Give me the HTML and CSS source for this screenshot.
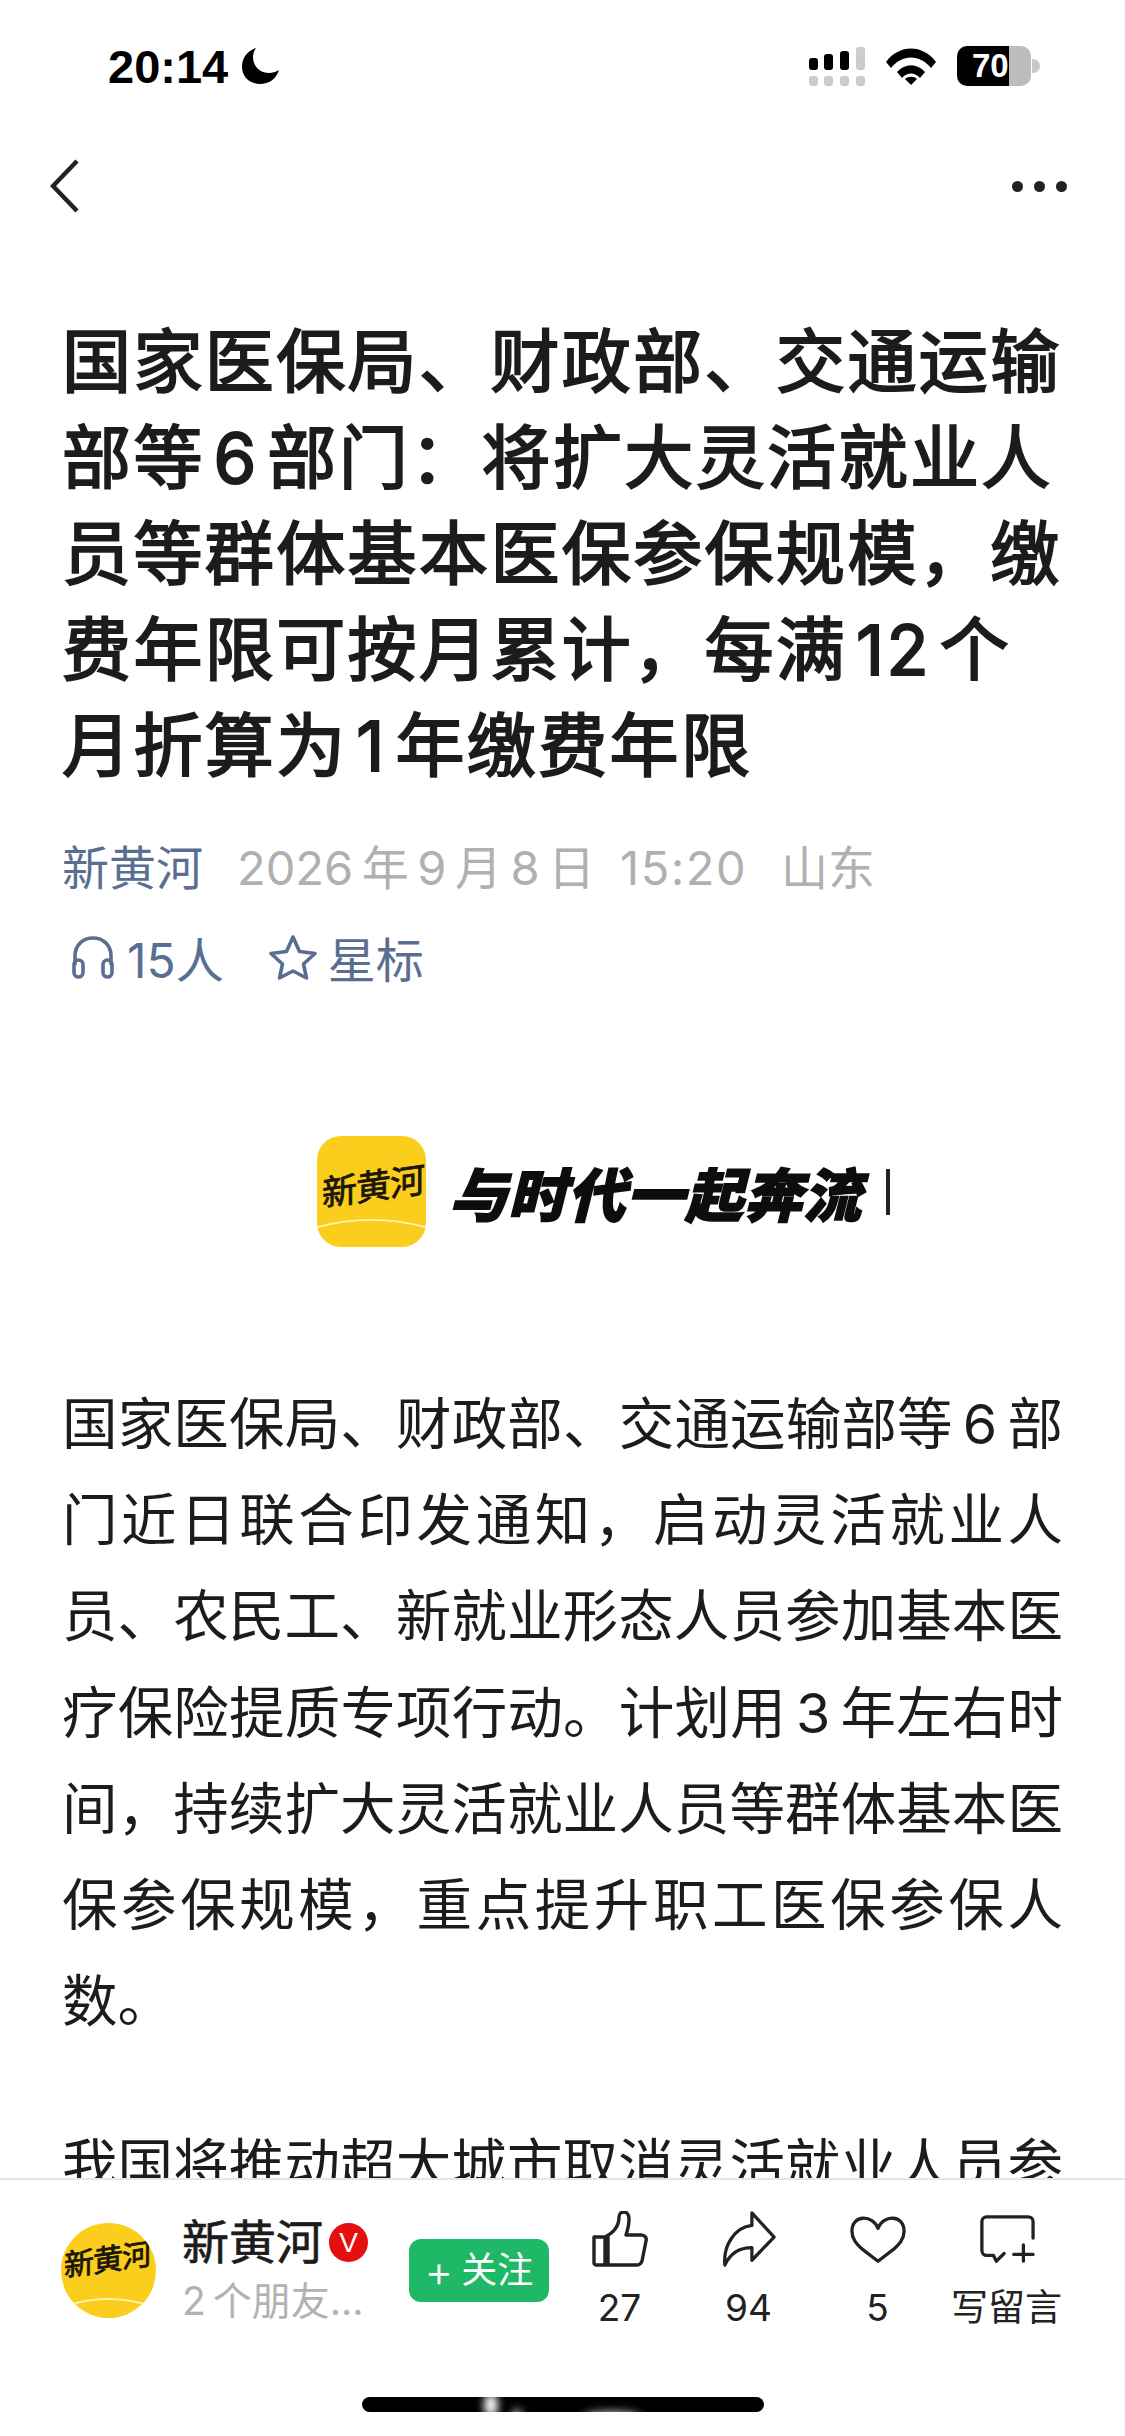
FILE: index.html
```html
<!DOCTYPE html>
<html lang="zh-CN">
<head>
  <meta charset="UTF-8" />
  <meta name="viewport" content="width=device-width, initial-scale=1.0"/>
  <title>新黄河</title>
  <link rel="stylesheet" href="styles.css">
</head>
<body>
<div class="page">

  <!-- Status bar -->
  <div class="status-bar">
    <div class="status-left">
      <span class="time">20:14</span>
      <svg class="moon" viewBox="0 0 37 36"><path d="M14 0C5 3 0 10 0 19c0 10 8 17 18 17 9 0 16-5 19-14-3 2-7 3-10 3C18 25 11 18 11 9c0-3 1-6 3-9z" fill="#000"/></svg>
    </div>
    <div class="status-right">
      <svg class="signal" viewBox="0 0 57 39">
        <rect x="0" y="11" width="9" height="12" rx="3" fill="#000"/>
        <rect x="15" y="7" width="9" height="16" rx="3" fill="#000"/>
        <rect x="31" y="4" width="9" height="19" rx="3" fill="#000"/>
        <rect x="47" y="0" width="9" height="23" rx="3" fill="#ccc"/>
        <rect x="0" y="29" width="9" height="10" rx="3" fill="#ccc"/>
        <rect x="15" y="29" width="9" height="10" rx="3" fill="#ccc"/>
        <rect x="31" y="29" width="9" height="10" rx="3" fill="#ccc"/>
        <rect x="47" y="29" width="9" height="10" rx="3" fill="#ccc"/>
      </svg>
      <svg class="wifi" viewBox="0 0 50 37">
        <path d="M0 14C13 -4 37 -4 50 14l-5 6C34 6 16 6 5 20z" fill="#000"/>
        <path d="M11 24c8-9 20-9 28 0l-5 6c-5-6-13-6-18 0z" fill="#000"/>
        <path d="M19 31c3-3 9-3 12 0l-6 6z" fill="#000"/>
      </svg>
      <div class="battery">
        <div class="battery-body">
          <span class="battery-level">70</span>
        </div>
        <div class="battery-nub"></div>
      </div>
    </div>
  </div>

  <!-- Nav -->
  <div class="nav">
    <svg class="back" viewBox="0 0 30 54"><path d="M27 2 3 27l24 25" fill="none" stroke="#222" stroke-width="4.5"/></svg>
    <div class="more"><i></i><i></i><i></i></div>
  </div>

  <!-- Article -->
  <div class="article">
    <h1 class="title">国家医保局、财政部、交通运输<br>部等&#8202;6&#8202;部门：将扩大灵活就业人<br>员等群体基本医保参保规模，缴<br>费年限可按月累计，每满&#8202;12&#8202;个<br>月折算为&#8202;1&#8202;年缴费年限</h1>

    <div class="meta">
      <span class="source">新黄河</span>
      <span class="date">2026&thinsp;年&thinsp;9&thinsp;月&thinsp;8&thinsp;日</span>
      <span class="date time-stamp">15:20</span>
      <span class="date">山东</span>
    </div>
    <div class="meta-links">
      <span class="meta-link">
        <svg class="headphones" viewBox="0 0 44 44" fill="none" stroke="#5a6e92" stroke-width="3.6">
          <path d="M4 30V21C4 10 12 3 22 3s18 7 18 18v9"/>
          <rect x="3" y="25" width="9" height="17" rx="4.5"/>
          <rect x="32" y="25" width="9" height="17" rx="4.5"/>
        </svg>
        15人
      </span>
      <span class="meta-link">
        <svg class="star" viewBox="0 0 48 46" fill="none" stroke="#5a6e92" stroke-width="3.6" stroke-linejoin="round"><path d="M24 3l6.5 14.500L46 19.500 34.500 30l3 14L24 37l-13.500 7 3-14L2 19.500 17.500 17.500z"/></svg>
        星标
      </span>
    </div>

    <div class="banner">
      <div class="brand-logo">
        <span class="brand-name">新黄河</span>
        <svg class="brand-arc" viewBox="0 0 109 30" preserveAspectRatio="none"><path d="M0 14Q54 -6 109 14" fill="none" stroke="#fff3b8" stroke-width="2.500"/></svg>
      </div>
      <span class="slogan">与时代一起奔流</span>
      <span class="cursor"></span>
    </div>

    <div class="para">
      <span class="ln">国家医保局、财政部、交通运输部等&thinsp;6&thinsp;部</span>
      <span class="ln">门近日联合印发通知，启动灵活就业人</span>
      <span class="ln">员、农民工、新就业形态人员参加基本医</span>
      <span class="ln">疗保险提质专项行动。计划用&thinsp;3&thinsp;年左右时</span>
      <span class="ln">间，持续扩大灵活就业人员等群体基本医</span>
      <span class="ln">保参保规模，重点提升职工医保参保人</span>
      <span class="ln end">数。</span>
    </div>
    <div class="para">
      <span class="ln">我国将推动超大城市取消灵活就业人员参</span>
    </div>
  </div>

  <!-- Bottom bar -->
  <div class="bottom-bar">
    <div class="avatar">
      <span class="avatar-name">新黄河</span>
      <svg class="avatar-arc" viewBox="0 0 95 20" preserveAspectRatio="none"><path d="M8 9Q47 -3 87 9" fill="none" stroke="#fff3b8" stroke-width="2"/></svg>
    </div>
    <div class="account">
      <div class="account-name">新黄河<span class="badge">V</span></div>
      <div class="account-sub">2&thinsp;个朋友...</div>
    </div>
    <div class="follow"><span class="plus">+</span>关注</div>
    <div class="actions">
      <div class="action">
        <svg viewBox="0 0 56 56" fill="none" stroke="#222" stroke-width="3.400" stroke-linejoin="round" stroke-linecap="round"><path d="M2 26h14v28H4a2 2 0 0 1-2-2zM13 54V26c6-3 14-9 14-20 0-3 2-5 5-5s5 3 5 7c0 6-1 10-3 16h15c4 0 6 3 5 6l-4 20c-1 3-2 4-5 4z"/></svg>
        <span>27</span>
      </div>
      <div class="action">
        <svg viewBox="0 0 56 58" fill="none" stroke="#222" stroke-width="3.400" stroke-linejoin="round" stroke-linecap="round"><path d="M31 2l23 25-23 24V38C19 38 9 43 3 56 1 36 13 17 31 15z"/></svg>
        <span>94</span>
      </div>
      <div class="action">
        <svg viewBox="0 0 58 50" fill="none" stroke="#222" stroke-width="3.400" stroke-linejoin="round"><path d="M29 14C24 0 2 -1 2 17c0 8 5 13 10 18l17 13 17-13c5-5 10-10 10-18C56 -1 34 0 29 14z"/></svg>
        <span>5</span>
      </div>
      <div class="action">
        <svg viewBox="0 0 58 50" fill="none" stroke="#222" stroke-width="3.400" stroke-linecap="round" stroke-linejoin="round"><path d="M56 24V7a5 5 0 0 0-5-5H8a5 5 0 0 0-5 5v30a5 5 0 0 0 5 5h7l3 6 8-8"/><path d="M36 41h20M46 31v17"/></svg>
        <span>写留言</span>
      </div>
    </div>
    <div class="home-indicator">
      <i class="smudge smudge-a"></i>
      <i class="smudge smudge-b"></i>
      <i class="smudge smudge-c"></i>
    </div>
  </div>

</div>
</body>
</html>
```

FILE: styles.css
```css
* {
  box-sizing: border-box;
}

body, html {
  margin: 0;
  padding: 0;
  background: #fff;
}

body {
  font-family: Inter, 'Noto Sans CJK SC', sans-serif;
  color: #1c1c1c;
}

.page {
  width: 1125px;
  height: 2436px;
  display: flex;
  flex-direction: column;
  overflow: hidden;
  position: relative;
}

/* Status bar */
.status-bar {
  height: 86px;
  padding: 46px 85px 0 108px;
  display: flex;
  justify-content: space-between;
  flex-shrink: 0;
}

.status-left {
  display: flex;
  align-items: center;
  gap: 14px;
  height: 40px;
}

.time {
  font-family: 'Liberation Sans', sans-serif;
  font-weight: bold;
  font-size: 47px;
  color: #000;
}

.moon {
  width: 37px;
  height: 36px;
}

.status-right {
  display: flex;
  align-items: center;
  height: 40px;
}

.signal {
  width: 57px;
  height: 39px;
}

.wifi {
  width: 50px;
  height: 37px;
  margin-left: 20px;
}

.battery {
  display: flex;
  align-items: center;
  margin-left: 21px;
}

.battery-body {
  width: 74px;
  height: 40px;
  border-radius: 10px;
  background: linear-gradient(90deg, #000 70%, #bdbdbd 70%);
  padding-left: 15px;
  color: #fff;
  font-family: 'Liberation Sans', sans-serif;
  font-weight: bold;
  font-size: 33px;
  line-height: 40px;
}

.battery-nub {
  width: 8px;
  height: 14px;
  border-radius: 0 7px 7px 0;
  background: #c9c9c9;
  margin-left: 1px;
}

/* Nav */
.nav {
  height: 130px;
  padding: 0 58px 0 50px;
  display: flex;
  align-items: center;
  justify-content: space-between;
  flex-shrink: 0;
  margin-top: 35px;
}

.back {
  width: 30px;
  height: 54px;
}

.more {
  display: flex;
  gap: 11px;
}

.more i {
  width: 11px;
  height: 11px;
  border-radius: 50%;
  background: #222;
}

/* Article */
.article {
  flex: 1;
  min-height: 0;
  overflow: hidden;
  padding: 0 62px;
}

.title {
  margin: 63px 0 0;
  font-size: 69px;
  line-height: 96px;
  font-weight: 400;
  -webkit-text-stroke: 2px #1c1c1c;
  letter-spacing: 2.400px;
  color: #1c1c1c;
  white-space: nowrap;
}

.meta {
  margin-top: 36px;
  font-size: 47px;
  line-height: 76px;
  display: flex;
  gap: 34px;
  white-space: nowrap;
}

.source {
  color: #5a6e92;
}

.date {
  color: #b0b0b0;
}

.time-stamp {
  margin-left: -9px;
  letter-spacing: 1.500px;
}

.meta-links {
  margin-top: 21px;
  height: 60px;
  display: flex;
  align-items: center;
  gap: 45px;
  padding-left: 8px;
  font-size: 48px;
  color: #5a6e92;
}

.meta-link {
  display: flex;
  align-items: center;
  gap: 11px;
}

.headphones {
  width: 46px;
  height: 44px;
}

.star {
  width: 48px;
  height: 46px;
}

/* Banner */
.banner {
  margin-top: 149px;
  height: 111px;
  padding-left: 255px;
  display: flex;
  align-items: center;
}

.brand-logo {
  width: 109px;
  height: 111px;
  border-radius: 24px;
  background: #fbcd1c;
  position: relative;
  flex-shrink: 0;
  padding: 28px 0 0 5px;
}

.brand-name {
  display: block;
  font-size: 35px;
  line-height: 44px;
  -webkit-text-stroke: 0.8px #1b1608;
  color: #1b1608;
  white-space: nowrap;
  transform: skewY(-8deg);
  letter-spacing: -1px;
}

.brand-arc {
  position: absolute;
  left: 0;
  bottom: 8px;
  width: 109px;
  height: 22px;
}

.slogan {
  margin-left: 23px;
  font-size: 58px;
  font-weight: 900;
  font-style: italic;
  -webkit-text-stroke: 1.5px #0d0d0d;
  color: #0d0d0d;
  letter-spacing: 1px;
  white-space: nowrap;
}

.cursor {
  width: 4px;
  height: 46px;
  margin-left: 24px;
  background: #222;
}

/* Body text */
.para {
  margin-top: 68px;
  font-size: 55.500px;
  line-height: 96.200px;
  color: #1c1c1c;
}

.banner + .para {
  margin-top: 129px;
}

.ln {
  display: block;
  white-space: nowrap;
  text-align: justify;
  text-align-last: justify;
}

.ln.end {
  text-align-last: left;
}

/* Bottom bar */
.bottom-bar {
  height: 258px;
  flex-shrink: 0;
  background: #fff;
  border-top: 2px solid #e6e6e6;
  padding: 41px 54px 0 61px;
  display: flex;
  align-items: flex-start;
  position: relative;
}

.avatar {
  width: 95px;
  height: 95px;
  border-radius: 50%;
  background: #fbcd1c;
  position: relative;
  flex-shrink: 0;
  margin-top: 2px;
  padding: 16px 0 0 3px;
  overflow: hidden;
}

.avatar-name {
  display: block;
  font-size: 30px;
  line-height: 40px;
  -webkit-text-stroke: 0.8px #1b1608;
  color: #1b1608;
  white-space: nowrap;
  letter-spacing: -1px;
  transform: skewY(-8deg);
}

.avatar-arc {
  position: absolute;
  left: 0;
  bottom: 2px;
  width: 95px;
  height: 20px;
}

.account {
  margin-left: 26px;
  width: 227px;
  flex-shrink: 0;
}

.account-name {
  display: flex;
  align-items: center;
  gap: 6px;
  font-size: 47px;
  line-height: 52px;
  -webkit-text-stroke: 0.7px #1c1c1c;
  color: #1c1c1c;
  margin-top: -5px;
}

.badge {
  width: 39px;
  height: 39px;
  border-radius: 50%;
  background: #e60f0f;
  color: #fff;
  -webkit-text-stroke: 0;
  font-family: 'Liberation Sans', sans-serif;
  font-size: 28px;
  line-height: 39px;
  text-align: center;
}

.account-sub {
  margin-top: 9px;
  font-size: 39px;
  line-height: 48px;
  color: #b2b2b2;
  white-space: nowrap;
}

.follow {
  width: 140px;
  height: 63px;
  margin-top: 18px;
  border-radius: 12px;
  background: #1fb866;
  color: #fff;
  font-size: 36px;
  line-height: 63px;
  display: flex;
  justify-content: center;
  align-items: center;
  gap: 8px;
  flex-shrink: 0;
}

.plus {
  font-size: 44px;
  line-height: 56px;
  font-weight: 300;
}

.actions {
  margin-left: auto;
  display: flex;
  margin-top: -10px;
}

.action {
  width: 129px;
  display: flex;
  flex-direction: column;
  align-items: center;
  font-size: 37px;
  color: #222;
  white-space: nowrap;
}

.action svg {
  width: 56px;
  height: 56px;
}

.action span {
  margin-top: 16px;
  line-height: 50px;
}

.home-indicator {
  position: absolute;
  left: 362px;
  top: 217px;
  width: 402px;
  height: 15px;
  border-radius: 8px;
  background: #000;
}

/* blurred watermark over the indicator */
.smudge {
  position: absolute;
  top: -4px;
  height: 24px;
  border-radius: 50%;
  background: #fff;
  filter: blur(4px);
}

.smudge-a {
  left: 122px;
  width: 14px;
}

.smudge-b {
  left: 150px;
  width: 10px;
  top: 12px;
  height: 18px;
  opacity: 0.8;
}

.smudge-c {
  left: 220px;
  width: 60px;
  top: 14px;
  height: 14px;
  opacity: 0.7;
}
```
